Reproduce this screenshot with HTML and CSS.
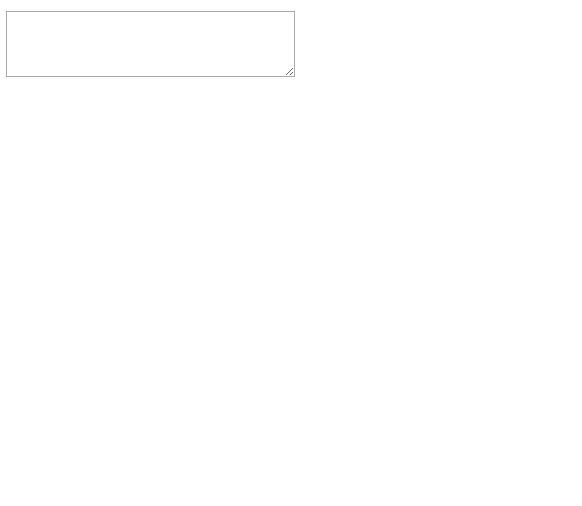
FILE: index.html
```html
<!DOCTYPE html>
<html lang="en">
<head>
    <meta charset="UTF-8">
    <title>Textarea</title>
    <link rel="stylesheet" href="styles.css">
</head>
<body>
    <div class="wrap">
        <textarea class="note"></textarea>
    </div>
</body>
</html>
```

FILE: styles.css
```css
body {
    margin: 0;
    background-color: #ffffff;
    font-family: 'Liberation Sans', sans-serif;
}

.wrap {
    padding: 11px 6px;
}

.note {
    display: block;
    box-sizing: border-box;
    width: 289px;
    height: 66px;
    margin: 0;
    border: 1px solid #a9a9a9;
    font-family: 'Liberation Mono', monospace;
    font-size: 13px;
}
```
